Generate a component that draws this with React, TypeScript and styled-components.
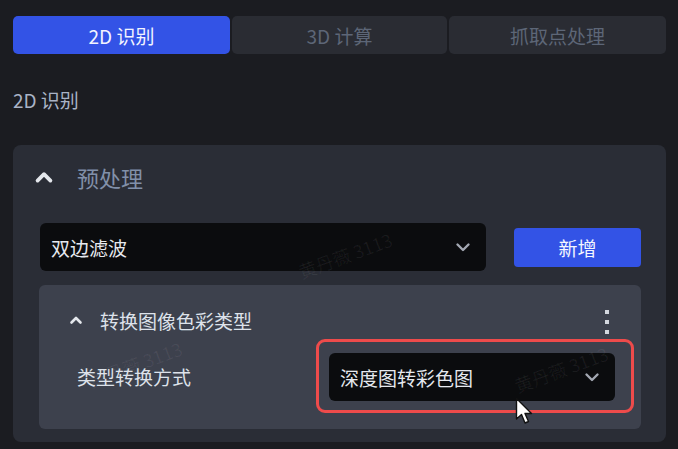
import React from 'react';
import styled, { createGlobalStyle } from 'styled-components';

const GlobalStyle = createGlobalStyle`
  html, body {
    margin: 0;
    padding: 0;
    background: #1b1c21;
  }
  body {
    font-family: 'Noto Sans CJK SC', 'Noto Sans', sans-serif;
  }
`;

const Page = styled.div`
  position: relative;
  width: 678px;
  height: 449px;
  box-sizing: border-box;
  padding: 16px 12px 0 13px;
  overflow: hidden;
  background: #1b1c21;
`;

const Tabs = styled.div`
  display: grid;
  grid-template-columns: 217px 215px 217px;
  gap: 2px;
  height: 38px;
`;

const Tab = styled.div<{ $active?: boolean }>`
  display: flex;
  align-items: center;
  justify-content: center;
  border-radius: 5px;
  font-size: 19px;
  background: ${(p) => (p.$active ? '#3353e6' : '#2a2c33')};
  color: ${(p) => (p.$active ? '#f2f4ff' : '#5d6677')};
`;

const SectionLabel = styled.div`
  margin-top: 34px;
  height: 24px;
  line-height: 24px;
  font-size: 19px;
  color: #a9b3c6;
`;

const Panel = styled.div`
  margin-top: 33px;
  height: 297px;
  box-sizing: border-box;
  background: #2a2d36;
  border-radius: 8px;
  padding: 18px 25px 0 27px;
`;

const PanelHeader = styled.div`
  display: flex;
  align-items: center;
  height: 28px;
  margin-left: -6px;
  gap: 23px;
  font-size: 22px;
  color: #8190a9;
`;

const ChevronUp = styled.svg<{ $size: number }>`
  width: ${(p) => p.$size}px;
  height: ${(p) => p.$size}px;
  flex: none;
`;

const ControlRow = styled.div`
  display: flex;
  align-items: center;
  margin-top: 32px;
  gap: 28px;
`;

const Select = styled.div<{ $width: number }>`
  display: flex;
  align-items: center;
  justify-content: space-between;
  width: ${(p) => p.$width}px;
  height: 48px;
  box-sizing: border-box;
  padding: 0 15px 0 11px;
  background: #0b0c0e;
  border-radius: 6px;
  font-size: 19px;
  color: #e6e9ef;
`;

const ChevronDown = styled.svg`
  width: 16px;
  height: 16px;
`;

const AddButton = styled.div`
  display: flex;
  align-items: center;
  justify-content: center;
  width: 127px;
  height: 39px;
  border-radius: 4px;
  background: #3353e6;
  color: #f4f6ff;
  font-size: 19px;
`;

const SubPanel = styled.div`
  margin-top: 14px;
  margin-left: -1px;
  width: 602px;
  height: 144px;
  box-sizing: border-box;
  background: #3d414d;
  border-radius: 6px;
  padding: 22px 32px 0 30px;
`;

const SubHeader = styled.div`
  display: flex;
  align-items: center;
  justify-content: space-between;
  height: 26px;
`;

const SubTitle = styled.div`
  display: flex;
  align-items: center;
  gap: 17px;
  font-size: 19px;
  color: #dde2ea;
`;

const Kebab = styled.div`
  display: flex;
  flex-direction: column;
  gap: 6px;
  margin-top: 4px;

  span {
    width: 4px;
    height: 4px;
    background: #d3d7de;
  }
`;

const FieldRow = styled.div`
  display: flex;
  align-items: center;
  justify-content: space-between;
  margin-top: 6px;
  margin-left: 8px;
`;

const FieldLabel = styled.div`
  font-size: 19px;
  color: #dde2ea;
`;

const Highlight = styled.div`
  border: 3.5px solid #ee4b4b;
  border-radius: 9px;
  padding: 11px 16px 9px 10px;
  margin-right: -25px;
`;

const Watermark = styled.div<{ $x: number; $y: number }>`
  position: absolute;
  left: ${(p) => p.$x}px;
  top: ${(p) => p.$y}px;
  transform: rotate(-20deg);
  font-size: 18px;
  color: rgba(255, 255, 255, 0.06);
  pointer-events: none;
  white-space: nowrap;
`;

const Cursor = styled.svg`
  position: absolute;
  left: 515px;
  top: 397px;
  width: 20px;
  height: 30px;
`;

const Up = ({ size = 14 }: { size?: number }) => (
  <ChevronUp $size={size} viewBox="0 0 14 14">
    <path d="M2.5 9.5 L7 5 L11.5 9.5" fill="none" stroke="#e4e7ec" strokeWidth="2.6" strokeLinecap="round" strokeLinejoin="round" />
  </ChevronUp>
);

const Down = () => (
  <ChevronDown viewBox="0 0 16 16">
    <path d="M2.5 5.5 L8 11 L13.5 5.5" fill="none" stroke="#a3a8b2" strokeWidth="2.4" strokeLinecap="round" strokeLinejoin="round" />
  </ChevronDown>
);

export default function App() {
  return (
    <Page>
      <GlobalStyle />
      <Tabs>
        <Tab $active>2D 识别</Tab>
        <Tab>3D 计算</Tab>
        <Tab>抓取点处理</Tab>
      </Tabs>
      <SectionLabel>2D 识别</SectionLabel>
      <Panel>
        <PanelHeader>
          <Up size={20} />
          预处理
        </PanelHeader>
        <ControlRow>
          <Select $width={446}>
            双边滤波
            <Down />
          </Select>
          <AddButton>新增</AddButton>
        </ControlRow>
        <SubPanel>
          <SubHeader>
            <SubTitle>
              <Up />
              转换图像色彩类型
            </SubTitle>
            <Kebab>
              <span />
              <span />
              <span />
            </Kebab>
          </SubHeader>
          <FieldRow>
            <FieldLabel>类型转换方式</FieldLabel>
            <Highlight>
              <Select $width={286}>
                深度图转彩色图
                <Down />
              </Select>
            </Highlight>
          </FieldRow>
        </SubPanel>
      </Panel>
      <Watermark $x={296} $y={242}>黄丹薇 3113</Watermark>
      <Watermark $x={86} $y={351}>黄丹薇 3113</Watermark>
      <Watermark $x={512} $y={356}>黄丹薇 3113</Watermark>
      <Cursor viewBox="0 0 20 30">
        <path d="M1.5 1.5 L1.5 22 L6.5 17.5 L10 26 L13.5 24.5 L10 16.5 L16.5 16.5 Z" fill="#ffffff" stroke="#111" strokeWidth="1.4" strokeLinejoin="round" />
      </Cursor>
    </Page>
  );
}
